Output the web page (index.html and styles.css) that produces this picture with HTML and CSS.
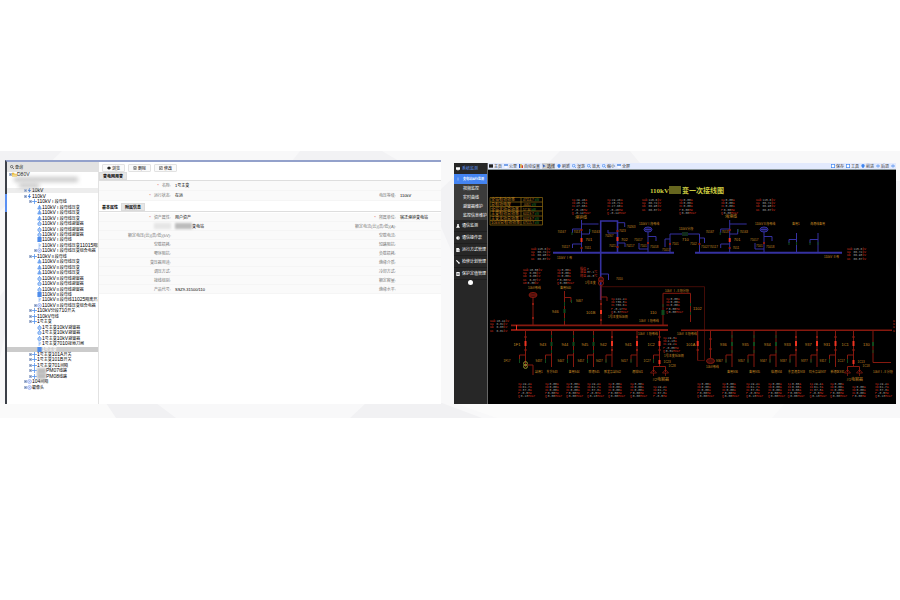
FILE: index.html
```html
<!DOCTYPE html>
<html lang="zh-CN">
<head>
<meta charset="utf-8">
<title>变电站监控</title>
<link rel="stylesheet" href="styles.css">
</head>
<body>
<svg class="defs" aria-hidden="true">
  <symbol id="i-folder" viewBox="0 0 12 12"><path d="M0 2h5l1 2h6v7H0z" fill="#e9b93c"/><path d="M1 6h11v5H0z" fill="#f8dc80"/></symbol>
  <symbol id="i-bolt" viewBox="0 0 12 12"><path d="M6 0L2 7h3l-1 5 6-7H6l2-5z" fill="#3f7fe0"/></symbol>
  <symbol id="i-node" viewBox="0 0 12 12"><path d="M6 0v12M0 6h12" stroke="#7eaef2" stroke-width="2.4"/><circle cx="6" cy="6" r="2" fill="#5a97ee"/></symbol>
  <symbol id="i-pt" viewBox="0 0 12 12"><path d="M6 0v4" stroke="#5a97ee" stroke-width="2"/><circle cx="6" cy="5" r="3" fill="#6ea3f0"/><rect x="1" y="6" width="10" height="5" rx="2" fill="#6ea3f0"/></symbol>
  <symbol id="i-arr" viewBox="0 0 12 12"><path d="M6 0v3" stroke="#5a97ee" stroke-width="2"/><circle cx="6" cy="7" r="4" fill="#dbe8fc" stroke="#5a97ee" stroke-width="2"/><path d="M3 7h6" stroke="#5a97ee" stroke-width="1.5"/></symbol>
  <symbol id="i-bus" viewBox="0 0 12 12"><rect x="1" y="0" width="10" height="12" fill="#4e8ceb"/></symbol>
  <symbol id="i-sw" viewBox="0 0 12 12"><path d="M5 0v12M5 6l5-3M5 7h5" stroke="#7eaef2" stroke-width="1.6" fill="none"/></symbol>
  <symbol id="i-comb" viewBox="0 0 12 12"><circle cx="6" cy="6" r="4.6" fill="#e8eefc" stroke="#7c98f0" stroke-width="1.6"/><circle cx="6" cy="6" r="1.6" fill="#9db4f4"/></symbol>
</svg>
<main class="stage">
  <svg class="facets" viewBox="0 0 900 267" preserveAspectRatio="none" aria-hidden="true">
    <path d="M0 0h900v267H0z" fill="#f8f8f9"/>
    <path d="M0 0h62l-62 60zM300 0h82l34 20H284zM560 0h70l10 12h-92z" fill="#f2f2f4"/>
    <path d="M441 38l13-12v80l-13-30zM896 30h4v90l-4-14zM0 145l6-8v40l-6 30z" fill="#f2f2f4"/>
    <path d="M106 252h50l20 15h-64zM366 252h76l40 15H350z" fill="#f1f1f3"/>
    <path d="M454 252h331l-13 15H497z" fill="#fbfbfb"/>
    <path d="M0 252h106l10 15H0z" fill="#fafafa"/>
  </svg>

  <section class="asset">
    <aside class="browser">
      <label class="search"><svg viewBox="0 0 12 12"><circle cx="5" cy="5" r="3.6" fill="none" stroke="#333" stroke-width="1.8"/><path d="M8 8l4 4" stroke="#333" stroke-width="2"/></svg><input type="text" placeholder="查询" aria-label="查询"></label>
      <ul class="tree" id="tree"></ul>
    </aside>
    <div class="detail">
      <div class="actions">
        <button type="button"><svg viewBox="0 0 12 12"><path d="M0 6q6-9 12 0q-6 9-12 0z" fill="#222"/></svg>浏览</button>
        <button type="button"><svg viewBox="0 0 12 12"><path d="M1 2h10M4 1h4M2 3l1 9h6l1-9M5 5v5M7 5v5" stroke="#333" stroke-width="1.4" fill="none"/></svg>删除</button>
        <button type="button"><svg viewBox="0 0 12 12"><path d="M8 2H1v9h9V7M4 8l1-3 5-5 2 2-5 5z" stroke="#333" stroke-width="1.5" fill="none"/></svg>修改</button>
      </div>
      <nav class="tabs"><button type="button" class="tab shaded">变电网用变</button></nav>
      <dl class="sheet tall">
        <div><dt><i>*</i>名称:</dt><dd>1号主变</dd></div><div></div>
        <div><dt><i>*</i>运行状态:</dt><dd>在运</dd></div><div><dt>电压等级:</dt><dd>110kV</dd></div>
      </dl>
      <nav class="tabs second"><button type="button" class="tab">基本属性</button><button type="button" class="tab shaded">附属信息</button></nav>
      <dl class="sheet">
        <div><dt><i>*</i>资产属性:</dt><dd>用户资产</dd></div><div><dt><i>*</i>所属单位:</dt><dd>宿迁港钟变电站</dd></div>
        <div><dt><span class="smudge pale"></span></dt><dd><span class="smudge"></span>变电站</dd></div><div><dt>额定电流(比)(高/低)(A):</dt><dd></dd></div>
        <div><dt>额定电压(比)(高/低)(kV):</dt><dd></dd></div><div><dt>空载电流:</dt><dd></dd></div>
        <div><dt>空载损耗:</dt><dd></dd></div><div><dt>短路阻抗:</dt><dd></dd></div>
        <div><dt>零序阻抗:</dt><dd></dd></div><div><dt>负载损耗:</dt><dd></dd></div>
        <div><dt>变压器用途:</dt><dd></dd></div><div><dt>绝缘介质:</dt><dd></dd></div>
        <div><dt>调压方式:</dt><dd></dd></div><div><dt>冷却方式:</dt><dd></dd></div>
        <div><dt>接线组别:</dt><dd></dd></div><div><dt>额定容量:</dt><dd></dd></div>
        <div><dt>产品代号:</dt><dd>SSZ9-31500/110</dd></div><div><dt>绝缘水平:</dt><dd></dd></div>
      </dl>
    </div>
  </section>

  <section class="scada">
    <nav class="side">
      <a href="#" class="brand"><svg viewBox="0 0 12 12"><path d="M0 1h12v7H8l-2 4-2-4H0z" fill="#fff"/></svg>系统监测</a>
      <a href="#" class="active"><svg viewBox="0 0 12 12"><path d="M6 2v3M6 7v3" stroke="#fff" stroke-width="2"/></svg>变电站运行监测</a>
      <div class="sub"><a href="#">视频监控</a><a href="#">实时曲线</a><a href="#">避雷器维护</a><a href="#">监控信息维护</a></div>
      <a href="#" class="item"><svg viewBox="0 0 12 12"><circle cx="6" cy="3" r="3" fill="#fff"/><path d="M4 5h4l4 6H0z" fill="#fff"/></svg>通信监测</a>
      <a href="#" class="item"><svg viewBox="0 0 12 12"><circle cx="6" cy="6" r="5.5" fill="#fff"/><path d="M6 6h4" stroke="#333" stroke-width="1.6"/></svg>通信操作票</a>
      <a href="#" class="item"><svg viewBox="0 0 12 12"><path d="M1 0h7l3 4v8H1z" fill="#fff"/><path d="M4 6h8M4 9h8" stroke="#333"/></svg>运行方式管理</a>
      <a href="#" class="item"><svg viewBox="0 0 12 12"><path d="M1 1l9 9M6 9h6" stroke="#fff" stroke-width="3.6"/></svg>检修计划管理</a>
      <a href="#" class="item"><svg viewBox="0 0 12 12"><path d="M1 0h10v12H1z" fill="#fff"/><path d="M4 4h4v4H4z" fill="none" stroke="#333" stroke-width="1.6"/></svg>保护定值管理</a>
      <button type="button" class="knob" aria-label="收起"></button>
    </nav>
    <div class="view">
      <div class="bar" id="bar"></div>
      <svg class="diagram" id="diagram" viewBox="488 170 408 234" role="img" aria-label="一次接线图"></svg>
    </div>
  </section>
</main>
<script src="app.js"></script>
</body>
</html>
```
FILE: styles.css
```css
* { box-sizing: border-box; }
body {
  margin: 0;
  padding-top: 151px;
  background: #fff;
  font-family: "Liberation Sans", "Noto Sans CJK SC", sans-serif;
  font-size: 4px;
  line-height: 5px;
  color: #000;
}
ul, dl, dd { margin: 0; padding: 0; }
ul { list-style: none; }
a { color: inherit; text-decoration: none; }
button, input { font: inherit; color: inherit; border: 0; padding: 0; margin: 0; background: none; }
.defs { position: absolute; width: 0; height: 0; }

.stage {
  position: relative;
  display: grid;
  grid-template-columns: 436fr 442fr;
  gap: 13px;
  padding: 9px 4px 14px 5px;
}
.facets { position: absolute; inset: 0; width: 100%; height: 100%; }
.asset, .scada { position: relative; min-width: 0; display: flex; }

.asset {
  background: #fff;
  border-top: 2px solid #93a1cb;
  border-left: 2px solid #3c4048;
  min-height: 244px;
}
.asset::before {
  content: "";
  position: absolute;
  left: -2px;
  top: 32px;
  width: 2px;
  height: 18px;
  background: #5b90f2;
}
.browser {
  flex: 0 0 92px;
  display: flex;
  flex-direction: column;
  overflow: hidden;
  border-right: 1px solid #e2e2e2;
  padding-bottom: 14px;
}
.search {
  display: flex;
  align-items: center;
  gap: 1px;
  height: 10px;
  padding-left: 3px;
  background: #e2e2e2;
}
.search svg { width: 4px; height: 4px; }
.search input { width: 60px; height: 6px; }
.search input::placeholder { color: #222; opacity: 1; }
.tree { flex: 1; display: flex; flex-direction: column; justify-content: space-between; }
.tree li {
  display: flex;
  align-items: center;
  height: 5px;
  white-space: nowrap;
  padding-left: 2px;
}
.tree li.hover { background: #ededed; }
.tree li.selected { background: #cbcbcb; color: #fff; }
.tree .pad { flex: none; width: 5px; }
.tree .exp { flex: none; width: 3px; height: 3px; }
.tree .exp.on { background: #6d86b0; border: 1px solid #a9b8d4; }
.tree svg { flex: none; width: 5px; height: 5px; }
.latin { font-size: 5px; }
.mask { width: 64px; height: 5px; background: #c9c9c9; filter: blur(2px); }
.mask.short { width: 20px; }
.chip { width: 9px; height: 6px; background: #bdbdbd; filter: blur(1px); }

.detail { flex: 1; min-width: 0; }
.actions { display: flex; gap: 3px; padding: 2px 3px 0; }
.actions button {
  display: flex;
  align-items: center;
  justify-content: center;
  gap: 1px;
  width: 23px;
  height: 8px;
  border: 1px solid #e2e2e2;
  border-radius: 1px;
  background: #fafafa;
}
.actions svg { width: 4px; height: 4px; }
.tabs { display: flex; height: 9px; border-bottom: 1px solid #dedede; }
.tabs.second { margin-top: 2px; }
.tab { height: 8px; padding: 0 3px; font-weight: 700; }
.tab.shaded { background: #e6e6e6; border: 1px solid #dcdcdc; }
.sheet { display: grid; grid-template-columns: 225fr 117fr; grid-auto-rows: 9px; padding-top: 1px; }
.sheet.tall { grid-auto-rows: 10px; padding: 0; }
.sheet > div { display: flex; align-items: center; gap: 4px; background: #fafafa; border-bottom: 1px solid #f5f5f5; white-space: nowrap; }
.sheet dt { flex: 0 0 72px; display: flex; justify-content: flex-end; color: #777; }
.sheet dt i { color: #e0564a; margin-right: 3px; font-style: normal; }
.sheet dd { display: flex; align-items: center; }
.smudge { width: 17px; height: 6px; background: #bcbcbc; filter: blur(1px); }
.smudge.pale { background: #e6e6e6; }

.scada { margin-top: 3px; background: #000; align-items: stretch; }
.side { flex: 0 0 34px; background: #272727; color: #fff; border-right: 1px solid #666; overflow: hidden; }
.side a { display: flex; align-items: center; white-space: nowrap; }
.side svg { flex: none; width: 4px; height: 4px; margin: 0 2px; }
.side .brand { height: 11px; color: #5b8fe8; }
.side .active { height: 10px; background: #4484f2; font-size: 3px; font-weight: 700; }
.side .active svg { margin-right: 3px; }
.sub { background: #3b3b3b; padding-left: 9px; }
.sub a { height: 9px; }
.side .item { height: 12px; border-bottom: 1px solid #1e1e1e; }
.knob { display: block; width: 5px; height: 5px; margin: 0 auto; border-radius: 50%; background: #fff; }
.view { flex: 1; min-width: 0; }
.bar {
  display: flex;
  gap: 2px;
  height: 7px;
  padding: 0 1px;
  overflow: hidden;
  background: #e3eafd;
  border-bottom: 1px solid #8b979b;
  color: #333;
}
.bar button { display: flex; align-items: center; gap: 1px; white-space: nowrap; }
.bar button.on { background: #cfcfcf; color: #111; }
.bar .push { margin-left: auto; }
.bar svg { width: 4px; height: 4px; }
.diagram { display: block; width: 100%; height: auto; background: #000; }
.diagram text { font-family: "Liberation Sans", "Noto Sans CJK SC", sans-serif; }
.blue { stroke: #3531a0; fill: none; }
.red { stroke: #86190f; fill: none; }
.o { fill: #c98c26; font-size: 4px; }
.os { fill: #c98c26; font-size: 3px; }
.r { fill: #d8301f; font-size: 3px; }
.diagram text.r { font-family: "Liberation Mono", "Noto Sans CJK SC", monospace; }
.g { fill: #a2a2a2; }
.heading { fill: #cccc40; font-size: 7px; font-weight: 700; }
.diagram text.heading { font-family: "Liberation Serif", "Noto Sans CJK SC", serif; }
```
FILE: app.js
```js
const rows = [
  [0, 'folder', 'D80V', 1], [1, '', 'MASK'], [2, '', 'SHORT'],
  [3, 'bolt', '10kV', 1, 'hover'], [3, 'bolt', '110kV', 1]
];
[['Ⅰ', '11015隔离'], ['Ⅱ', '11025隔离开关']].forEach(([n, sw]) => {
  const b = '110kV' + n + '段母线';
  rows.push([4, 'node', b, 1]);
  for (let i = 0; i < 3; i++) rows.push([5, 'pt', b + '压变']);
  for (let i = 0; i < 3; i++) rows.push([5, 'arr', b + '避雷器']);
  rows.push([5, 'bus', b], [5, 'sw', n === 'Ⅰ' ? b + '压变' + sw : b + sw], [5, 'comb', b + '压变组合电器', 1]);
});
rows.push([4, 'node', '110kV分段710开关', 1], [4, 'node', '110kV母线', 1], [4, 'node', '1号主变', 1]);
for (let i = 0; i < 3; i++) rows.push([5, 'arr', '1号主变10kV避雷器']);
rows.push([5, 'sw', '1号主变7010接地刀闸'], [5, 'bus', '1号主变', 0, 'selected'],
  [4, 'node', '1号主变101A开关', 1], [4, 'node', '1号主变101B开关', 1], [4, 'node', '1号主变701间隔', 1],
  [4, 'node', '#PM07线路', 1], [4, 'node', '#PM08线路', 1], [3, 'comb', '104间隔', 1], [3, 'comb', '摄像头', 1]);

document.getElementById('tree').innerHTML = rows.map(([level, icon, label, exp, cls]) => {
  const pad = '<span class="pad"></span>'.repeat(level);
  if (label === 'MASK') return `<li>${pad}<span class="mask"></span></li>`;
  if (label === 'SHORT') return `<li>${pad}<span class="mask short"></span></li>`;
  const text = label.replace('#', '').replace(/[A-Za-z0-9]+/g, '<span class="latin">$&</span>');
  const chip = label[0] === '#' ? '<span class="chip"></span>' : '';
  return `<li class="${cls || ''}">${pad}<span class="exp ${exp ? 'on' : ''}"></span><svg><use href="#i-${icon}"/></svg>${chip}<span>${text}</span></li>`;
}).join('');

const glyph = {
  a: '<rect y="1" width="12" height="10" fill="#222"/>',
  b: '<path d="M0 1h12v4H0z" fill="#3f7fe0"/><path d="M2 7h8v4H2z" fill="#fff"/>',
  c: '<path d="M0 0h4v12H0z" fill="#2358c8"/><path d="M4 0h4v12H4z" fill="#e3b52c"/><path d="M8 4h4v8H8z" fill="#d0392e"/>',
  d: '<path d="M2 0l9 7-5 1-2 4z" fill="#3e65b8"/>',
  e: '<circle cx="6" cy="5" r="5" fill="#3f86f0"/><path d="M4 8h4v4H4z" fill="#3f86f0"/>',
  f: '<circle cx="5" cy="5" r="4" fill="#dce8ff" stroke="#3f86f0" stroke-width="2"/><path d="M8 8l4 4" stroke="#3f86f0" stroke-width="2"/>',
  g: '<rect x="1" y="1" width="10" height="10" fill="#fff" stroke="#3f86f0" stroke-width="2"/>',
  h: '<path d="M0 6h12M6 1v10" stroke="#6fa2f2" stroke-width="3"/>'
};
document.getElementById('bar').innerHTML = [
  ['a', '主页'], ['b', '公里'], ['c', '自动设置'], ['d', '选择', 'on'], ['e', '刷新'], ['f', '漫游'], ['f', '放大'], ['f', '缩小'], ['b', '全屏'],
  ['g', '保存', 'push'], ['g', '工具'], ['e', '前进'], ['h', '后退'], ['h', '']
].map(([i, t, c]) => `<button type="button" class="${c || ''}" aria-label="${t || '更多'}"><svg viewBox="0 0 12 12">${glyph[i]}</svg>${t}</button>`).join('');

const out = [];
const line = (d, c, w = 1) => out.push(`<path d="${d}" class="${c}" stroke-width="${w}"/>`);
const box = (x, y, w, h, f) => out.push(`<rect x="${x}" y="${y}" width="${w}" height="${h}" fill="${f}"/>`);
const text = (x, y, t, c = 'os') => out.push(`<text x="${x}" y="${y}" class="${c}">${t}</text>`);
const HOT = '#ee3320', COLD = '#0f4a1c';
const contact = (x, y, c = '#8a1a10') => box(x - 1, y, 2, 2, c);
const meter = (x, y, names, vals, unit, step) => names.forEach((n, i) =>
  text(x, y + i * step, `${n}<tspan class="g" dx="1">${vals[i % vals.length]}</tspan>${unit[i % unit.length]}`, 'r'));

// heading and statistics table
text(650, 193, '110kV', 'heading');
text(682, 193, '变一次接线图', 'heading');
box(669, 186, 12, 8, '#66661f');
out.push('<path d="M490 197.500h52.500V225H490zM521 197.500V225M490 202h52.500M490 206.500h52.500M490 211h52.500M490 216h52.500M490 220.500h52.500" fill="none" stroke="#80600f" stroke-width=".8"/>');
['全站有功功率', '总有功电度', '全站无功总功率', '主变有功总功率', '主变无功总功率', '10kV总有功功率'].forEach((t, i) => {
  text(491, 201.300 + i * 4.6, t, 'o');
  text(523, 201.300 + i * 4.6, `${['47114.7', '-0051', '57.34', '60119.7', '60119.7', '67515.7'][i]}<tspan fill="#27852b" dx="1">kW</tspan>`, 'os');
});

// 110 kV side
line('M553 252.700H674M695 252.700H842', 'blue', 2);
line('M600.700 300V221H617.500V252', 'blue', 1.600);
line('M600.700 274H608.500V280', 'blue');
const bay = (x) => {
  line(`M${x} 220V252M${x} 224H${x + 17}`, 'blue');
  line(`M${x} 229H${x - 9}V233M${x} 234H${x + 8}V229M${x} 244H${x - 9}V248`, 'blue');
  contact(x, 229); contact(x, 247); box(x - 1, 238, 2, 4, HOT);
  box(x - 10, 232, 1, 3, COLD); box(x + 8, 229, 1, 3, COLD);
  text(x - 24, 233, '70167'); text(x - 8, 233, '7013'); text(x + 10, 233, '70163');
  text(x + 4, 241, '701', 'o'); text(x - 20, 248, '70117'); text(x + 3, 249, '7011');
};
bay(581.500); bay(729.700);
line('M617.500 222.700H624.700V227M617.500 233H608V230M617.500 243H625V247', 'blue');
contact(617.500, 230); contact(617.500, 246); box(616.500, 237, 2, 4, HOT);
text(627, 228, '70263'); text(605, 237, '70267'); text(619, 232, '7023'); text(621, 240.500, '702', 'o'); text(609, 247, '7021'); text(626, 247, '70217');
[648, 764].forEach((x, i) => {
  out.push(`<ellipse cx="${x}" cy="229.500" rx="4" ry="2.500" fill="#17174e" stroke="#3531a0"/>`);
  line(`M${x} 232V252M${x} 236.500H${x + 8}V241M${x} 249H${x - 9}V243M${x - 3} 229.500H${x + 3}`, 'blue');
  contact(x, 242); text(x - 9, 225, '110kV' + (i ? 'Ⅱ' : 'Ⅰ') + '段母线'); text(x - 14, 241, '71017'); text(x - 8, 246.500, '7101'); text(x + 2, 248, '71018');
});
line('M670 252V234H699.500V252M670 239H665V247M699.500 238H704.500V243', 'blue', 1);
box(682, 232, 6, 4, '#112c1c'); contact(670, 243); contact(699.500, 243);
text(679, 230, '110kV分段'); text(682, 241, '710', 'o'); text(672, 245, '7101'); text(662, 251, '71017'); text(690, 245, '7102'); text(701, 248, '71027');
line('M796.500 233V252M796.500 239.500H789V243M818 233V252M818 239.500H810V243', 'blue');
box(788.500, 242, 1, 3, COLD); box(796, 242, 1, 3, COLD); box(809.500, 242, 1, 3, COLD); box(817.500, 242, 1, 3, COLD);
text(575, 219, '港钟线', 'o'); text(725, 218, '海港线', 'o'); text(792, 224.500, '备用1'); text(810, 224.500, '海港线备用');
text(557, 259, '110kV Ⅰ母'); text(824, 258, '110kV Ⅱ母');

const ua = ['Uab', 'Ua ', 'Ub ', 'Uc '], uv = ['115.6', '66.74', '66.98', '66.87'];
const ia = ['Ia', 'Ib', 'Ic', 'P', 'Q'], iv = ['29.46', '28.71', '27.68', '-5.20', '-0.14'];
const iz = ['0.00'], iu = ['A', 'A', 'A', 'MW', 'MVar'];
[[571.700, iv], [607, iv], [679, iz], [721, iz]].forEach(([x, v]) => meter(x, 201, ia, v, iu, 3.200));
meter(642, 201, ua, uv, ['kV'], 3.200); meter(756, 201, ua, uv, ['kV'], 3.200);
meter(531, 250, ua, uv, ['kV'], 3.200); meter(847, 250, ua, uv, ['kV'], 3.200);
meter(523, 271, [...ua, 'U0'], ['10.50', '6.06', '6.05', '6.07', '0.30'], ['kV'], 3.200);
meter(557, 271, ia, iz, iu, 3.200);
meter(580, 270, ['档位', '油温', '绕温'], ['7', '37.1', '41.8'], ['', '℃', '℃'], 3.400);
meter(490, 322, ua, ['10.44', '6.02', '6.03', '6.01'], ['kV'], 3.200);
meter(893, 322, ['U', 'U', 'U', 'U'], [''], [''], 3.200);
meter(611, 300, ia, ['241.4', '736.3', '786.6', '-5.17', '0.37'], iu, 3.200);
meter(666, 300, ia, iz, iu, 3.200);
meter(663, 339, ia, ['29.3', '4.13', '29.2', '-0.05', '0.51'], iu, 3.200);

// 10 kV side
line('M601 286.700H704.500V360.500H697.700', 'red', .5);
line('M511 325.300H668M511 330H668', 'red', 1.800);
line('M681 330.200H892', 'red', 1.400);
box(516, 325, 1, 5, HOT);
out.push('<circle cx="601" cy="279.500" r="2.500" fill="#3c0c0a" stroke="#86190f"/><circle cx="601" cy="283" r="2.500" fill="none" stroke="#86190f"/>');
line('M601 285V325M601 297H607V301M564.500 291V325M564.500 297.500H571V302M533 296V325', 'red');
out.push('<ellipse cx="533" cy="295" rx="4" ry="2.500" fill="#3c0c0a" stroke="#86190f"/><path d="M530 295h6" stroke="#86190f"/>');
contact(533, 303); contact(533, 317); contact(601, 303); contact(601, 319); box(600, 310, 2, 4, HOT);
box(564, 302, 1, 4, COLD); box(563.500, 309, 2, 4, COLD); box(564, 318, 1, 3, COLD); box(571, 300, 1, 3, COLD);
line('M663 325V293.300H690.500V322', 'red', 1); box(662.500, 304, 1, 3, COLD); box(661.500, 310, 3, 5, COLD); box(690, 303, 1, 3, COLD); box(690, 312, 1, 3, COLD);
text(528, 289, '10kV母线'); text(560, 289, '备用940'); text(585, 283.500, '1号主变'); text(616, 280, '7010'); text(576, 301.500, '9467');
text(552, 313, '946', 'o'); text(586, 313.500, '101B', 'o'); text(608, 318, '1号主变低压侧'); text(650, 313.500, '110', 'o'); text(693, 310, '1102', 'o');
text(665, 292, '10kV Ⅰ-Ⅱ段分段'); text(639, 321.500, '10kV Ⅰ段母线'); text(638, 335, '10kV Ⅰ段母线'); text(677, 335, '10kV Ⅱ段母线');

const feeders = [
  [525.500, '1F1', 1, ''], [551.500, '943', 0, '东方943'], [573.500, '944', 0, '备用944'], [593.500, '945', 0, '联港945'], [612, '942', 1, '胜发泵站942'],
  [637, '941', 1, '港城941'], [659.500, '1C2', 1, ''], [732, '936', 0, '备用936'], [754, '935', 0, '备用935'], [776, '934', 0, '临港934'],
  [796, '933', 1, '东吴港务933'], [817, '937', 1, '码头泵站937'], [835.500, '931', 1, '新港区931'], [853.500, '1C1', 1, '']
];
feeders.forEach(([x, n, hot, name], i) => {
  const bank = n[1] === 'C';
  line(`M${x} 330V${bank ? 366 : 367}M${x} 355H${x - 6}V362`, 'red', 1);
  if (hot) { box(x - 1, 341, 2, 5, HOT); contact(x, 336); contact(x, 349); }
  else { box(x - 1, 342, 2, 4, COLD); box(x - .5, 335, 1, 3, COLD); box(x - .5, 350, 1, 3, COLD); }
  box(x - 6.500, 359, 1, 4, COLD);
  text(x - 12, 346, n, 'o'); text(x - (i ? 16 : 22), 362, n + '7');
  if (name) text(x - (name.length > 6 ? 8 : 5), 373, name);
  if (bank) {
    box(x - 1, 360, 2, 4, HOT);
    line(`M${x - 6} 372V366.500H${x + 6}V372`, 'red', 1);
    [x - 6, x + 6].forEach(c => line(`M${c - 3} 373L${c} 369.500L${c + 3} 373ZM${c} 373V376`, 'red', .8));
    text(x - 7, 381, i > 8 ? '#1电容器' : '#2电容器', 'o'); text(x + 4, 363, n + '3'); text(x + 9, 367, n + '8');
  }
});
out.push('<g fill="none" stroke="#92922e"><circle cx="525.500" cy="363.500" r="1.900"/><circle cx="525.500" cy="366.500" r="1.900"/></g>');
line('M527 365H533V375', 'red', 1); text(535, 373, '站用1');
line('M697.700 330V360.500M710.500 330V358', 'red', 1); box(696.700, 341, 2, 5, HOT); contact(697.700, 349); contact(710.500, 338); contact(710.500, 348);
out.push('<ellipse cx="710.500" cy="361" rx="4" ry="2.500" fill="#3c0c0a" stroke="#86190f"/>');
line('M873 330V362.500H891', 'red', 1); box(872, 342, 2, 4, COLD); box(872.500, 350, 1, 3, COLD);
text(686, 346, '101A', 'o'); text(863, 346, '130', 'o'); text(706, 368, '10kV母线'); text(873, 373, '10kVⅠ-Ⅱ分段'); text(664, 357, '1号主变低压侧');
[518, 545, 566, 587, 608, 630, 653, 697, 722, 746, 768, 787.500, 809.500, 830, 852, 875].forEach((x, i) => {
  const short = i === 6 || i === 14;
  meter(x, short ? 388 : 385, short ? ia.slice(0, 4) : ia, i % 3 ? ['0.00'] : ['29.4', '61.7', '37.3', '-0.5', '0.13'], iu, 3);
});

document.getElementById('diagram').innerHTML = out.join('');
```
